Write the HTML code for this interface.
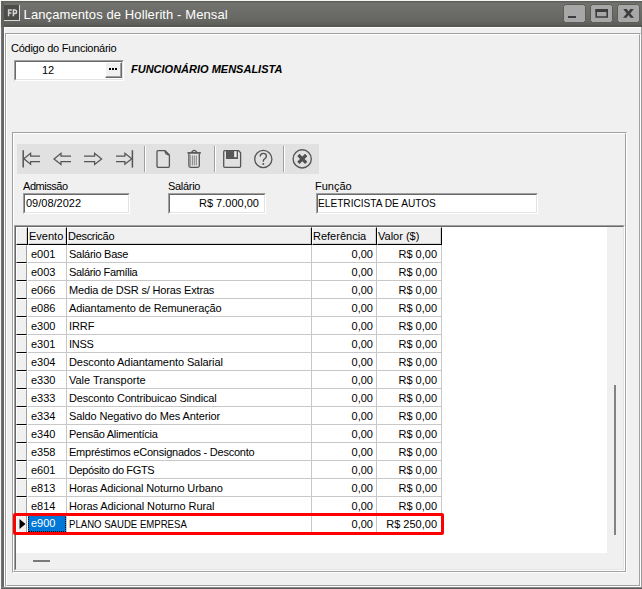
<!DOCTYPE html>
<html><head><meta charset="utf-8">
<style>
*{margin:0;padding:0;box-sizing:border-box}
html,body{width:642px;height:589px;overflow:hidden;background:#f4f4f4;font-family:"Liberation Sans",sans-serif;font-size:11px;color:#000}
.a{position:absolute}
#frame{left:1px;top:1px;width:641px;height:588px;background:#666}
#title{left:1px;top:1px;width:641px;height:26px;background:linear-gradient(#5f605c 0,#5f605c 1px,#71726d 2px,#6f706b 7px,#656661 20px,#5e5f5b 23px,#545551 26px)}
#client{left:4px;top:27px;width:637px;height:560px;background:#f0f0f0;border-top:1px solid #fff;border-left:1px solid #fff}
.eo{border-top:1px solid #a0a0a0;border-left:1px solid #a0a0a0;border-right:1px solid #fff;border-bottom:1px solid #fff}
.ei{border-top:1px solid #fff;border-left:1px solid #fff;border-right:1px solid #a0a0a0;border-bottom:1px solid #a0a0a0}
.sunk{border-top:1px solid #a0a0a0;border-left:1px solid #a0a0a0;border-right:1px solid #fff;border-bottom:1px solid #fff}
.sunki{border-top:1px solid #696969;border-left:1px solid #696969;border-right:1px solid #e3e3e3;border-bottom:1px solid #e3e3e3;background:#fff}
.wb{top:4px;width:23px;height:19px;background:#a6a6a6;border:1px solid #5e5e5b;border-radius:3px}
.t{white-space:nowrap;line-height:13px}
.lbl{font-size:11px}
.row{position:absolute;left:16px;width:591px;height:18px}
.ind{position:absolute;left:0;top:0;width:11px;height:18px;background:#f0f0f0;border-left:1px solid #fff;border-top:1px solid #fff;border-right:1px solid #a0a0a0;border-bottom:1px solid #000}
.c{position:absolute;top:0;height:18px;border-right:1px solid #c8c8c8;border-bottom:1px solid #c8c8c8;white-space:nowrap;line-height:17px;padding-top:1px;overflow:hidden}
.c1{left:12px;width:39px;padding-left:3px}
.c2{left:51px;width:245px;padding-left:2px;letter-spacing:-0.2px}
.c3{left:296px;width:65px;text-align:right;padding-right:3px}
.c4{left:361px;width:65px;text-align:right;padding-right:4px}
.h{position:absolute;top:0;height:18px;background:#f0f0f0;border-left:1px solid #fff;border-top:1px solid #fff;border-right:1px solid #000;border-bottom:1px solid #000;white-space:nowrap;line-height:16px;box-shadow:inset -1px -1px 0 #d2d2d2}
.sel{color:#fff}
.sel span{position:absolute;left:0;top:0;width:38px;height:17px;background:#0078d7;padding-left:3px;outline:1px dotted #000;outline-offset:-1px}
</style></head><body>
<div class="a" id="frame"></div>
<div class="a" style="left:1px;top:27px;width:1px;height:560px;background:#767676"></div>
<div class="a" style="left:641px;top:27px;width:1px;height:560px;background:#9c9c9c"></div>
<div class="a" style="left:1px;top:587px;width:641px;height:1px;background:#858585"></div>
<div class="a" style="left:1px;top:588px;width:641px;height:1px;background:#5a5a5a"></div>
<div class="a" id="title"></div>
<div class="a" style="left:1px;top:1px;width:3px;height:26px;background:#61625e"></div>
<!-- FP icon -->
<div class="a" style="left:4px;top:5px;width:16px;height:16px;background:#4c4c4b;border-right:1px solid #d8d8d8;border-bottom:1px solid #d8d8d8"></div>
<svg class="a" style="left:0;top:0" width="24" height="24"><path d="M8.6 16.2 V10 H11.8 M8.6 12.9 H11.4" stroke="#cfcfcf" stroke-width="1.5" fill="none"/><path d="M13.4 16.2 V10 H15 Q16.6 10 16.6 11.8 Q16.6 13.6 15 13.6 H13.4" stroke="#d8d8d8" stroke-width="1.5" fill="none"/></svg>
<div class="a t" style="left:23.6px;top:7px;font-size:13px;color:#fff;line-height:16px;letter-spacing:0.1px">Lançamentos de Hollerith - Mensal</div>
<!-- window buttons -->
<svg class="a" style="left:560px;top:0" width="82" height="27" viewBox="560 0 82 27">
 <g fill="#a7a7a7" stroke="#5c5c59" stroke-width="1">
  <path d="M565.5 4.5 H583.5 L585.5 6.5 V20.5 L583.5 22.5 H565.5 L563.5 20.5 V6.5 Z"/>
  <path d="M592.5 4.5 H610.5 L612.5 6.5 V20.5 L610.5 22.5 H592.5 L590.5 20.5 V6.5 Z"/>
  <path d="M619.5 4.5 H637.5 L639.5 6.5 V20.5 L637.5 22.5 H619.5 L617.5 20.5 V6.5 Z"/>
 </g>
 <rect x="568" y="16" width="8" height="2" fill="#3c3c3c"/>
 <path d="M596.2 10.5 H607.2 V17 H596.2 Z" fill="none" stroke="#3c3c3c" stroke-width="1.6"/>
 <rect x="595.4" y="9" width="12.6" height="3" fill="#3c3c3c"/>
 <path d="M623.2 9 H626.8 L628.5 11.6 L630.2 9 H633.8 L630.3 13.4 L634 17.8 H630.4 L628.5 15.1 L626.6 17.8 H623 L626.7 13.4 Z" fill="#3c3c3c"/>
</svg>

<div class="a" id="client"></div>
<!-- panel 1 -->
<div class="a eo" style="left:5px;top:33px;width:636px;height:554px"></div>
<div class="a ei" style="left:6px;top:34px;width:634px;height:552px"></div>

<div class="a t" style="left:11px;top:42px;letter-spacing:-0.25px">Código do Funcionário</div>
<!-- codigo input -->
<div class="a sunk" style="left:14px;top:60px;width:110px;height:21px"></div>
<div class="a sunki" style="left:15px;top:61px;width:108px;height:19px"></div>
<div class="a t" style="left:42px;top:64px">12</div>
<div class="a" style="left:105px;top:62px;width:17px;height:16px;background:#f0f0f0;border-left:1px solid #fff;border-top:1px solid #fff;border-right:1px solid #696969;border-bottom:1px solid #696969;box-shadow:inset -1px -1px 0 #a0a0a0"></div>
<div class="a" style="left:109px;top:68px;width:2px;height:2px;background:#000"></div>
<div class="a" style="left:112px;top:68px;width:2px;height:2px;background:#000"></div>
<div class="a" style="left:115px;top:68px;width:2px;height:2px;background:#000"></div>
<div class="a t" style="left:131px;top:63px;font-weight:bold;font-style:italic">FUNCIONÁRIO MENSALISTA</div>

<!-- panel 2 -->
<div class="a eo" style="left:12px;top:132px;width:615px;height:441px"></div>
<div class="a ei" style="left:13px;top:133px;width:613px;height:439px"></div>

<!-- toolbar -->
<div class="a" style="left:17px;top:144px;width:302px;height:30px;background:#e1e1e1"></div>
<svg class="a" style="left:17px;top:144px" width="302" height="30" viewBox="17 144 302 30">
 <g stroke="#555" stroke-width="1.25" fill="none" stroke-linejoin="miter">
  <!-- first -->
  <path d="M23.2 150.2 V167.6" stroke-width="1.5"/>
  <path d="M40 156 H30.6 V153.2 L23.8 158.8 L30.6 164.3 V161.7 H40"/>
  <!-- prev -->
  <path d="M71 156 H61 V153.2 L54 158.9 L61 164.4 V161.7 H71"/>
  <!-- next -->
  <path d="M84 156 H94.6 V153.2 L101.6 158.9 L94.6 164.4 V161.7 H84"/>
  <!-- last -->
  <path d="M116 156 H124.9 V153.3 L131.8 158.8 L124.9 164.3 V161.7 H116"/>
  <path d="M132.4 150.2 V167.6" stroke-width="1.5"/>
  <!-- doc -->
  <path d="M158 150.6 H165 L169.4 155 V166.3 Q169.4 167.3 168.4 167.3 H158 Q157 167.3 157 166.3 V151.6 Q157 150.6 158 150.6 Z" stroke-width="1.3"/>
  <path d="M165 151 Q165.2 154.6 169 154.8" stroke-width="1.2"/>
  <path d="M165.6 151.3 L169 154.7" stroke-width="1.0"/>
  <!-- trash -->
  <path d="M187.5 152.9 H200.8" stroke-width="1.7"/>
  <path d="M191.5 152.3 Q194.2 148.6 196.9 152.3" stroke-width="1.3"/>
  <path d="M188.9 153.8 V165.8 Q188.9 167.3 190.4 167.3 H197.8 Q199.3 167.3 199.3 165.8 V153.8" stroke-width="1.3"/>
  <path d="M192.4 155.5 V165.3 M194.3 155.5 V165.3 M196.3 155.5 V165.3" stroke-width="0.9" stroke="#7a7a7a"/>
  <path d="M190.3 155 V166" stroke-width="1.2" stroke="#9a9a9a"/>
  <!-- floppy -->
  <path d="M224.8 150.6 H238.6 L240.6 152.8 V166.2 Q240.6 167.3 239.5 167.3 H224.8 Q223.7 167.3 223.7 166.2 V151.7 Q223.7 150.6 224.8 150.6 Z" stroke-width="1.3"/>
  <!-- help -->
  <circle cx="263.3" cy="159" r="8.6" stroke-width="1.3"/>
  <!-- close -->
  <circle cx="302.2" cy="158.9" r="9.1" stroke-width="1.35"/>
 </g>
 <rect x="226" y="151" width="12" height="8" fill="#575757"/>
 <rect x="234.2" y="151.2" width="2.4" height="6" fill="#f2f2f2"/>
 <path d="M260.2 156.6 Q260.2 153.4 263.3 153.4 Q266.4 153.4 266.4 156.1 Q266.4 157.9 264.6 158.8 Q263.3 159.5 263.3 161.3 V161.8" stroke="#555" stroke-width="1.4" fill="none"/><circle cx="263.3" cy="164" r="1" fill="#555"/>
 <path d="M298.4 155 L306.2 162.8 M306.2 155 L298.4 162.8" stroke="#505050" stroke-width="3.2" fill="none"/>
 <!-- separators -->
 <rect x="144" y="146" width="1" height="26" fill="#a0a0a0"/><rect x="145" y="146" width="1" height="26" fill="#fff"/>
 <rect x="214" y="146" width="1" height="26" fill="#a0a0a0"/><rect x="215" y="146" width="1" height="26" fill="#fff"/>
 <rect x="283" y="146" width="1" height="26" fill="#a0a0a0"/><rect x="284" y="146" width="1" height="26" fill="#fff"/>
</svg>

<!-- fields -->
<div class="a t" style="left:23px;top:180px;letter-spacing:-0.45px">Admissão</div>
<div class="a sunk" style="left:23px;top:193px;width:107px;height:21px"></div>
<div class="a sunki" style="left:24px;top:194px;width:105px;height:19px"></div>
<div class="a t" style="left:26px;top:197px">09/08/2022</div>

<div class="a t" style="left:168px;top:180px;letter-spacing:-0.3px">Salário</div>
<div class="a sunk" style="left:168px;top:193px;width:98px;height:21px"></div>
<div class="a sunki" style="left:169px;top:194px;width:96px;height:19px"></div>
<div class="a t" style="left:199px;top:197px">R$ 7.000,00</div>

<div class="a t" style="left:315px;top:180px">Função</div>
<div class="a sunk" style="left:316px;top:193px;width:222px;height:21px"></div>
<div class="a sunki" style="left:317px;top:194px;width:220px;height:19px"></div>
<div class="a t" style="left:318px;top:197px;transform:scaleX(0.921);transform-origin:0 0">ELETRICISTA DE AUTOS</div>

<!-- grid -->
<div class="a" style="left:14px;top:225px;width:611px;height:346px;border-top:1px solid #a0a0a0;border-left:1px solid #a0a0a0;border-right:1px solid #fff;border-bottom:1px solid #fff"></div>
<div class="a" style="left:15px;top:226px;width:609px;height:344px;border-top:1px solid #696969;border-left:1px solid #696969;border-right:1px solid #e3e3e3;border-bottom:1px solid #e3e3e3;background:#f0f0f0"></div>
<div class="a" style="left:16px;top:227px;width:591px;height:326px;background:#fff"></div>
<div class="a" style="left:614px;top:385px;width:2px;height:150px;background:#828282"></div>
<div class="a" style="left:33px;top:560px;width:17px;height:2px;background:#7a7a7a"></div>

<div id="grid" class="a" style="left:0;top:0">
<div class="row" style="top:227px">
 <div class="h" style="left:0;width:12px"></div>
 <div class="h" style="left:12px;width:39px;padding-left:0">Evento</div>
 <div class="h" style="left:51px;width:245px;padding-left:0;letter-spacing:-0.3px">Descricão</div>
 <div class="h" style="left:296px;width:65px;padding-left:0">Referência</div>
 <div class="h" style="left:361px;width:65px;padding-left:0">Valor ($)</div>
</div>
<!--ROWS-->
<div class="row" style="top:245px"><div class="ind"></div><div class="c c1">e001</div><div class="c c2" style="letter-spacing:-0.273px">Salário Base</div><div class="c c3">0,00</div><div class="c c4">R$ 0,00</div></div>
<div class="row" style="top:263px"><div class="ind"></div><div class="c c1">e003</div><div class="c c2" style="letter-spacing:-0.336px">Salário Família</div><div class="c c3">0,00</div><div class="c c4">R$ 0,00</div></div>
<div class="row" style="top:281px"><div class="ind"></div><div class="c c1">e066</div><div class="c c2" style="letter-spacing:-0.163px">Media de DSR s/ Horas Extras</div><div class="c c3">0,00</div><div class="c c4">R$ 0,00</div></div>
<div class="row" style="top:299px"><div class="ind"></div><div class="c c1">e086</div><div class="c c2" style="letter-spacing:-0.1px">Adiantamento de Remuneração</div><div class="c c3">0,00</div><div class="c c4">R$ 0,00</div></div>
<div class="row" style="top:317px"><div class="ind"></div><div class="c c1">e300</div><div class="c c2" style="letter-spacing:-0.1px">IRRF</div><div class="c c3">0,00</div><div class="c c4">R$ 0,00</div></div>
<div class="row" style="top:335px"><div class="ind"></div><div class="c c1">e301</div><div class="c c2" style="letter-spacing:-0.3px">INSS</div><div class="c c3">0,00</div><div class="c c4">R$ 0,00</div></div>
<div class="row" style="top:353px"><div class="ind"></div><div class="c c1">e304</div><div class="c c2" style="letter-spacing:-0.09px">Desconto Adiantamento Salarial</div><div class="c c3">0,00</div><div class="c c4">R$ 0,00</div></div>
<div class="row" style="top:371px"><div class="ind"></div><div class="c c1">e330</div><div class="c c2" style="letter-spacing:-0.021px">Vale Transporte</div><div class="c c3">0,00</div><div class="c c4">R$ 0,00</div></div>
<div class="row" style="top:389px"><div class="ind"></div><div class="c c1">e333</div><div class="c c2" style="letter-spacing:-0.179px">Desconto Contribuicao Sindical</div><div class="c c3">0,00</div><div class="c c4">R$ 0,00</div></div>
<div class="row" style="top:407px"><div class="ind"></div><div class="c c1">e334</div><div class="c c2" style="letter-spacing:-0.121px">Saldo Negativo do Mes Anterior</div><div class="c c3">0,00</div><div class="c c4">R$ 0,00</div></div>
<div class="row" style="top:425px"><div class="ind"></div><div class="c c1">e340</div><div class="c c2" style="letter-spacing:-0.282px">Pensão Alimentícia</div><div class="c c3">0,00</div><div class="c c4">R$ 0,00</div></div>
<div class="row" style="top:443px"><div class="ind"></div><div class="c c1">e358</div><div class="c c2" style="letter-spacing:-0.241px">Empréstimos eConsignados - Desconto</div><div class="c c3">0,00</div><div class="c c4">R$ 0,00</div></div>
<div class="row" style="top:461px"><div class="ind"></div><div class="c c1">e601</div><div class="c c2" style="letter-spacing:-0.367px">Depósito do FGTS</div><div class="c c3">0,00</div><div class="c c4">R$ 0,00</div></div>
<div class="row" style="top:479px"><div class="ind"></div><div class="c c1">e813</div><div class="c c2" style="letter-spacing:-0.138px">Horas Adicional Noturno Urbano</div><div class="c c3">0,00</div><div class="c c4">R$ 0,00</div></div>
<div class="row" style="top:497px"><div class="ind"></div><div class="c c1">e814</div><div class="c c2" style="letter-spacing:-0.086px">Horas Adicional Noturno Rural</div><div class="c c3">0,00</div><div class="c c4">R$ 0,00</div></div>
<div class="row" style="top:515px"><div class="ind"><svg style="position:absolute;left:2px;top:2.5px" width="7" height="11"><path d="M0.5 0 L6.5 5 L0.5 10 Z" fill="#000"/></svg></div><div class="c c1 sel"><span>e900</span></div><div class="c c2" style="letter-spacing:0px"><span style="display:inline-block;transform:scaleX(0.872);transform-origin:0 0">PLANO SAUDE EMPRESA</span></div><div class="c c3">0,00</div><div class="c c4">R$ 250,00</div></div>
<!--/ROWS-->
</div>
<div class="a" style="left:13px;top:513px;width:431px;height:22px;border:3px solid #f00;border-radius:2px"></div>
</body></html>
